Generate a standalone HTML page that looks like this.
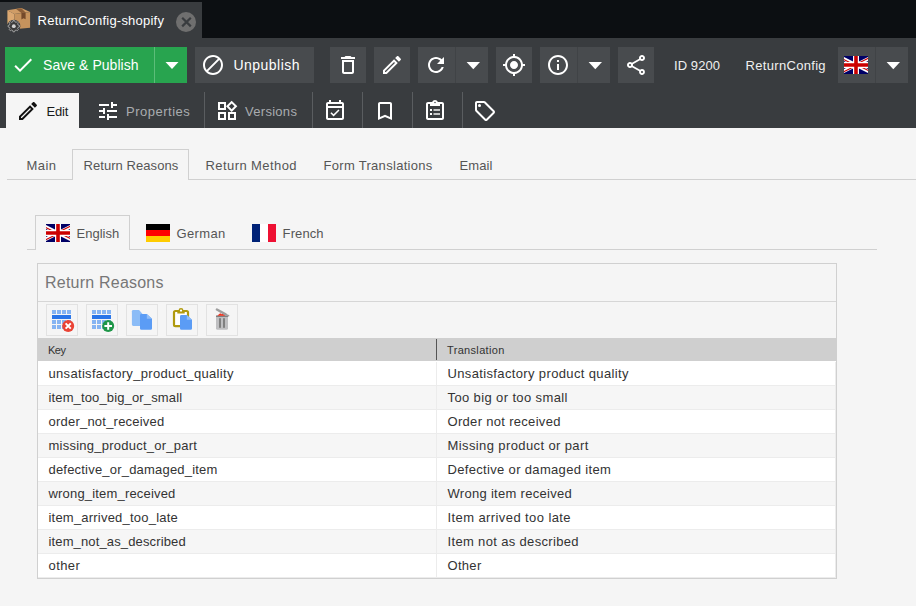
<!DOCTYPE html>
<html lang="en">
<head>
<meta charset="utf-8">
<title>ReturnConfig-shopify</title>
<style>
*{box-sizing:border-box;margin:0;padding:0}
html,body{width:916px;height:606px;overflow:hidden}
body{background:#f5f5f5;font-family:"Liberation Sans",sans-serif;font-size:13px;color:#333;position:relative}
.abs{position:absolute}
.t{position:absolute;white-space:nowrap;line-height:1}
#topbar{left:0;top:0;width:916px;height:38px;background:#0c0f12}
#maintab{left:0;top:2px;width:202px;height:36px;background:#393c3f}
#toolbar{left:0;top:38px;width:916px;height:90px;background:#393c3f}
.btn{position:absolute;top:47px;height:36px;background:#484b4e}
.ic{position:absolute;width:24px;height:24px;fill:#fff}
.sep{position:absolute;top:92px;width:1px;height:36px;background:#5a5d60}
.w{color:#fff}
.line{position:absolute;background:#d0d0d0}
.tab1{top:159px;font-size:13px;color:#555}
.tab2{top:227px;font-size:13px;color:#555}
.flag{position:absolute;width:24px;height:18px;overflow:hidden}
.ib{position:absolute;top:304px;width:32px;height:32px;border:1px solid #e2e2e2}
.row{position:absolute;left:38px;width:798px;height:24px;border-bottom:1px solid #ececec;background:#fff}
.row.alt{background:#f6f6f6}
.row span{position:absolute;top:5px;font-size:13px;line-height:14px;white-space:nowrap;color:#333}
.row .k{left:10.5px}
.row .v{left:409.5px}
</style>
</head>
<body>
<div id="topbar" class="abs"></div>
<div id="maintab" class="abs"></div>
<div id="toolbar" class="abs"></div>

<!-- main tab -->
<svg class="abs" style="left:4px;top:4px" width="32" height="32" viewBox="0 0 32 32">
  <polygon points="3.4,6.300 17.400,4.100 26.100,7.900 10.300,10" fill="#cf9c66"/>
  <polygon points="3.4,6.300 10.300,10 10.300,25.200 3.400,20.100" fill="#dba871"/>
  <polygon points="10.300,10 26.100,7.900 26.100,23.800 10.300,25.200" fill="#c6935d"/>
  <polygon points="12.100,5 17.400,4.200 21.600,8.500 17.400,9.100" fill="#8a5c36"/>
  <polygon points="17.400,9.100 21.600,8.500 21.600,15.300 19.500,14.200 17.400,15.600" fill="#74492a"/>
  <circle cx="9.800" cy="22.200" r="6.500" fill="#393c3f"/>
  <path d="M14.18 21.15 L15.44 21.40 L15.44 23.00 L14.18 23.25 L13.64 24.55 L14.36 25.62 L13.22 26.76 L12.15 26.04 L10.85 26.58 L10.60 27.84 L9.00 27.84 L8.75 26.58 L7.45 26.04 L6.38 26.76 L5.24 25.62 L5.96 24.55 L5.42 23.25 L4.16 23.00 L4.16 21.40 L5.42 21.15 L5.96 19.85 L5.24 18.78 L6.38 17.64 L7.45 18.36 L8.75 17.82 L9.00 16.56 L10.60 16.56 L10.85 17.82 L12.15 18.36 L13.22 17.64 L14.36 18.78 L13.64 19.85Z" fill="#3b3b3b" stroke="#b4b4b4" stroke-width="0.800" stroke-linejoin="round"/>
  <circle cx="9.800" cy="22.200" r="1.900" fill="#d2d2d2"/>
</svg>
<div class="t w" id="tabtitle" style="letter-spacing:0.22px;left:37.6px;top:14px;font-size:13px">ReturnConfig-shopify</div>
<svg class="abs" style="left:176px;top:12px" width="20" height="20" viewBox="0 0 20 20"><circle cx="10" cy="10" r="10" fill="#6f6f6f"/><path d="M6.200 5.800 L14.800 14.400 M14.800 5.800 L6.200 14.400" stroke="#393c3f" stroke-width="2.200" fill="none"/></svg>

<!-- toolbar row 1 -->
<div class="btn" style="left:5px;width:149px;background:#28a44f"></div>
<div class="btn" style="left:154px;width:1px;background:#5cbd79"></div>
<div class="btn" style="left:155px;width:32px;background:#28a44f"></div>
<svg class="ic" style="left:11px;top:53px" viewBox="0 0 24 24"><path d="M9 16.17L4.83 12l-1.42 1.41L9 19 21 7l-1.41-1.41z"/></svg>
<div class="t w" id="savetxt" style="letter-spacing:0.05px;left:43px;top:58px;font-size:14px">Save &amp; Publish</div>
<svg class="abs" style="left:165px;top:61px" width="14" height="9" viewBox="0 0 14 9"><polygon points="0.5,1 13.5,1 7,8" fill="#fff"/></svg>

<div class="btn" style="left:195px;width:119px"></div>
<svg class="ic" style="left:201px;top:53px" viewBox="0 0 24 24"><path d="M12 2C6.48 2 2 6.48 2 12s4.48 10 10 10 10-4.48 10-10S17.52 2 12 2zM4 12c0-4.42 3.58-8 8-8 1.85 0 3.55.63 4.9 1.69L5.69 16.9C4.63 15.55 4 13.85 4 12zm8 8c-1.85 0-3.55-.63-4.9-1.69L18.31 7.1C19.37 8.45 20 10.15 20 12c0 4.42-3.58 8-8 8z"/></svg>
<div class="t w" id="unpubtxt" style="letter-spacing:0.46px;left:233.5px;top:58px;font-size:14px">Unpublish</div>

<div class="btn" style="left:330px;width:36px"></div>
<svg class="ic" style="left:336px;top:53px" viewBox="0 0 24 24"><path d="M6 19c0 1.1.9 2 2 2h8c1.1 0 2-.9 2-2V7H6v12zM8 9h8v10H8V9zm7.500-5l-1-1h-5l-1 1H5v2h14V4h-3.500z"/></svg>

<div class="btn" style="left:374px;width:36px"></div>
<svg class="ic" style="left:380px;top:53px" viewBox="0 0 24 24"><path d="M14.060 9.020l.92.92L5.920 19H5v-.92l9.060-9.060M17.660 3c-.25 0-.51.1-.7.290l-1.830 1.830 3.750 3.750 1.830-1.830c.39-.39.39-1.020 0-1.410l-2.340-2.340c-.2-.2-.45-.29-.71-.29zm-3.600 3.190L3 17.250V21h3.750L17.810 9.940l-3.750-3.750z"/></svg>

<div class="btn" style="left:418px;width:37px"></div>
<div class="btn" style="left:455px;width:1px;background:#404346"></div>
<div class="btn" style="left:456px;width:32px"></div>
<svg class="ic" style="left:424px;top:53px" viewBox="0 0 24 24"><path d="M17.650 6.350C16.200 4.900 14.210 4 12 4c-4.420 0-7.990 3.580-7.990 8s3.570 8 7.990 8c3.730 0 6.840-2.550 7.730-6h-2.080c-.82 2.330-3.040 4-5.650 4-3.310 0-6-2.690-6-6s2.690-6 6-6c1.660 0 3.140.69 4.220 1.780L13 11h7V4l-2.350 2.350z"/></svg>
<svg class="abs" style="left:466px;top:61px" width="15" height="9" viewBox="0 0 15 9"><polygon points="0.600,0.900 14,0.900 7.300,8.300" fill="#fff"/></svg>

<div class="btn" style="left:496px;width:36px"></div>
<svg class="ic" style="left:502px;top:53px" viewBox="0 0 24 24"><path d="M12 8c-2.210 0-4 1.790-4 4s1.790 4 4 4 4-1.790 4-4-1.790-4-4-4zm8.940 3c-.46-4.170-3.770-7.480-7.940-7.940V1h-2v2.060C6.830 3.520 3.520 6.830 3.060 11H1v2h2.060c.46 4.170 3.770 7.480 7.940 7.940V23h2v-2.060c4.170-.46 7.480-3.770 7.940-7.940H23v-2h-2.060zM12 19c-3.870 0-7-3.130-7-7s3.130-7 7-7 7 3.130 7 7-3.130 7-7 7z"/></svg>

<div class="btn" style="left:540px;width:37px"></div>
<div class="btn" style="left:577px;width:1px;background:#404346"></div>
<div class="btn" style="left:578px;width:32px"></div>
<svg class="ic" style="left:546px;top:53px" viewBox="0 0 24 24"><path d="M11 7h2v2h-2zm0 4h2v6h-2zm1-9C6.480 2 2 6.480 2 12s4.480 10 10 10 10-4.480 10-10S17.520 2 12 2zm0 18c-4.410 0-8-3.590-8-8s3.590-8 8-8 8 3.590 8 8-3.590 8-8 8z"/></svg>
<svg class="abs" style="left:588px;top:61px" width="15" height="9" viewBox="0 0 15 9"><polygon points="0.600,0.900 14,0.900 7.300,8.300" fill="#fff"/></svg>

<div class="btn" style="left:618px;width:36px"></div>
<svg class="ic" style="left:624px;top:53px" viewBox="0 0 24 24"><path d="M18 16.080c-.76 0-1.440.3-1.960.77L8.910 12.700c.05-.23.09-.46.090-.7s-.04-.47-.09-.7l7.050-4.110c.54.5 1.250.81 2.040.81 1.660 0 3-1.340 3-3s-1.340-3-3-3-3 1.340-3 3c0 .24.040.47.090.7L8.040 9.810C7.500 9.310 6.790 9 6 9c-1.660 0-3 1.340-3 3s1.340 3 3 3c.79 0 1.500-.31 2.040-.81l7.120 4.160c-.05.21-.08.430-.08.650 0 1.610 1.310 2.920 2.920 2.920s2.920-1.310 2.920-2.920-1.310-2.920-2.920-2.920zM18 4c.55 0 1 .45 1 1s-.45 1-1 1-1-.45-1-1 .45-1 1-1zM6 13c-.55 0-1-.45-1-1s.45-1 1-1 1 .45 1 1-.45 1-1 1zm12 7.020c-.55 0-1-.45-1-1s.45-1 1-1 1 .45 1 1-.45 1-1 1z"/></svg>

<div class="t w" id="idtxt" style="letter-spacing:0.08px;left:674px;top:59px;font-size:13px;color:#f0f0f0">ID 9200</div>
<div class="t w" id="clstxt" style="letter-spacing:0.31px;left:745.6px;top:59px;font-size:13px;color:#f0f0f0">ReturnConfig</div>

<div class="btn" style="left:838px;width:37px"></div>
<div class="btn" style="left:875px;width:1px;background:#404346"></div>
<div class="btn" style="left:876px;width:32px"></div>
<svg class="flag" style="left:844px;top:56px" viewBox="0 0 24 18"><use href="#gb"/></svg>
<svg class="abs" style="left:886px;top:61px" width="15" height="9" viewBox="0 0 15 9"><polygon points="0.600,0.900 14,0.900 7.300,8.300" fill="#fff"/></svg>

<!-- toolbar row 2 -->
<div class="abs" style="left:6px;top:93px;width:73px;height:35px;background:#f5f5f5"></div>
<svg class="ic" style="left:16px;top:99px;fill:#111" viewBox="0 0 24 24"><path d="M14.060 9.020l.92.92L5.920 19H5v-.92l9.060-9.060M17.660 3c-.25 0-.51.1-.7.290l-1.830 1.830 3.750 3.750 1.830-1.830c.39-.39.39-1.020 0-1.410l-2.340-2.340c-.2-.2-.45-.29-.71-.29zm-3.600 3.190L3 17.250V21h3.750L17.810 9.940l-3.750-3.750z"/></svg>
<div class="t" id="edittxt" style="letter-spacing:-0.20px;left:46.5px;top:105px;font-size:13px;color:#1a1a1a">Edit</div>

<svg class="ic" style="left:96px;top:99px" viewBox="0 0 24 24"><path d="M3 17v2h6v-2H3zM3 5v2h10V5H3zm10 16v-2h8v-2h-8v-2h-2v6h2zM7 9v2H3v2h4v2h2V9H7zm14 4v-2H11v2h10zm-6-4h2V7h4V5h-4V3h-2v6z"/></svg>
<div class="t" id="proptxt" style="letter-spacing:0.50px;left:126px;top:105px;font-size:13px;color:#a9acaf">Properties</div>
<div class="sep" style="left:204px"></div>
<svg class="ic" style="left:215px;top:99px" viewBox="0 0 24 24"><path d="M16.660 4.520l2.830 2.830-2.830 2.830-2.830-2.830 2.830-2.830M9 5v4H5V5h4m10 10v4h-4v-4h4M9 15v4H5v-4h4m7.660-13.310L11 7.340 16.660 13l5.660-5.660-5.660-5.650zM11 3H3v8h8V3zm10 10h-8v8h8v-8zm-10 0H3v8h8v-8z"/></svg>
<div class="t" id="vertxt" style="letter-spacing:0.29px;left:245px;top:105px;font-size:13px;color:#a9acaf">Versions</div>
<div class="sep" style="left:312px"></div>
<svg class="ic" style="left:323px;top:99px" viewBox="0 0 24 24"><path d="M19 3h-1V1h-2v2H8V1H6v2H5c-1.110 0-1.990.9-1.990 2L3 19c0 1.100.89 2 2 2h14c1.100 0 2-.9 2-2V5c0-1.100-.9-2-2-2zm0 16H5V9h14v10zM5 7V5h14v2H5zm5.560 10.460l5.930-5.930-1.060-1.060-4.870 4.870-2.110-2.110-1.060 1.060z"/></svg>
<div class="sep" style="left:362px"></div>
<svg class="ic" style="left:373px;top:99px" viewBox="0 0 24 24"><path d="M17 3H7c-1.100 0-1.990.9-1.990 2L5 21l7-3 7 3V5c0-1.100-.9-2-2-2zm0 15l-5-2.180L7 18V5h10v13z"/></svg>
<div class="sep" style="left:412px"></div>
<svg class="ic" style="left:423px;top:99px" viewBox="0 0 24 24"><path d="M19 3h-4.180C14.400 1.840 13.300 1 12 1c-1.300 0-2.400.84-2.820 2H5c-1.100 0-2 .9-2 2v14c0 1.100.9 2 2 2h14c1.100 0 2-.9 2-2V5c0-1.100-.9-2-2-2zm-7-.25c.41 0 .75.340.75.750s-.34.750-.75.750-.75-.34-.75-.75.340-.75.750-.75zM19 19H5V5h2v2h10V5h2v14z"/><rect x="7" y="10" width="2" height="2"/><rect x="10.500" y="10.300" width="6.500" height="1.400"/><rect x="7" y="14" width="2" height="2"/><rect x="10.500" y="14.300" width="6.500" height="1.400"/></svg>
<div class="sep" style="left:462px"></div>
<svg class="ic" style="left:473px;top:99px" viewBox="0 0 24 24"><path d="M21.410 11.580l-9-9C12.050 2.220 11.550 2 11 2H4c-1.100 0-2 .9-2 2v7c0 .55.220 1.050.59 1.420l9 9c.36.360.86.580 1.410.580s1.050-.22 1.410-.59l7-7c.37-.36.590-.86.590-1.410s-.23-1.060-.59-1.420zM13 20.010L4 11V4h7v-.01l9 9-7 7.020z"/><circle cx="6.500" cy="6.500" r="1.500"/></svg>

<!-- inner tabs -->
<div class="line" style="left:7px;top:179px;width:909px;height:1px"></div>
<div class="abs" style="left:72px;top:149px;width:117px;height:31px;border:1px solid #d0d0d0;border-bottom:none;background:#f5f5f5"></div>
<div class="t tab1" id="t_main" style="letter-spacing:0.47px;left:26.5px">Main</div>
<div class="t tab1" id="t_rr" style="letter-spacing:0.06px;left:83.5px">Return Reasons</div>
<div class="t tab1" id="t_rm" style="letter-spacing:0.42px;left:205.5px">Return Method</div>
<div class="t tab1" id="t_ft" style="letter-spacing:0.30px;left:323.5px">Form Translations</div>
<div class="t tab1" id="t_em" style="letter-spacing:0.10px;left:459.5px">Email</div>

<!-- language tabs -->
<div class="line" style="left:27px;top:249px;width:850px;height:1px"></div>
<div class="abs" style="left:35px;top:215px;width:95px;height:35px;border:1px solid #d0d0d0;border-bottom:none;background:#f5f5f5"></div>
<svg width="0" height="0" style="position:absolute"><defs>
<clipPath id="gbt"><path d="M30,15 h30 v15 z v15 h-30 z h-30 v-15 z v-15 h30 z"/></clipPath><g id="gb" transform="scale(0.6) translate(-10,0)"><path d="M0,0 v30 h60 v-30 z" fill="#000066"/><path d="M0,0 L60,30 M60,0 L0,30" stroke="#fff" stroke-width="6"/><path d="M0,0 L60,30 M60,0 L0,30" clip-path="url(#gbt)" stroke="#cc0000" stroke-width="4"/><path d="M30,0 v30 M0,15 h60" stroke="#fff" stroke-width="10"/><path d="M30,0 v30 M0,15 h60" stroke="#cc0000" stroke-width="6"/></g>
</defs></svg>
<svg class="flag" style="left:46px;top:224px" viewBox="0 0 24 18"><use href="#gb"/></svg>
<div class="t tab2" id="l_en" style="left:76.5px">English</div>
<svg class="flag" style="left:146px;top:224px" viewBox="0 0 24 18"><rect width="24" height="6" fill="#000"/><rect y="6" width="24" height="6" fill="#ff0000"/><rect y="12" width="24" height="6" fill="#ffcc00"/></svg>
<div class="t tab2" id="l_de" style="letter-spacing:0.40px;left:176.4px">German</div>
<svg class="flag" style="left:252px;top:224px" viewBox="0 0 24 18"><rect width="8" height="18" fill="#002277"/><rect x="8" width="8" height="18" fill="#fff"/><rect x="16" width="8" height="18" fill="#ee1133"/></svg>
<div class="t tab2" id="l_fr" style="letter-spacing:0.10px;left:282.6px">French</div>

<!-- panel -->
<div class="abs" style="left:37px;top:263px;width:800px;height:316px;border:1px solid #d0d0d0"></div>
<div class="t" id="ptitle" style="letter-spacing:0.22px;left:45px;top:275px;font-size:16px;color:#777">Return Reasons</div>
<div class="line" style="left:38px;top:301px;width:798px;height:1px;background:#d6d6d6"></div>

<div class="ib" style="left:46px"></div><svg class="abs" style="left:46px;top:304px" width="32" height="32" viewBox="0 0 32 32"><g fill="#86b4f2"><rect x="6" y="6" width="4" height="4"/><rect x="11" y="6" width="4" height="4"/><rect x="16" y="6" width="4" height="4"/><rect x="21" y="6" width="4" height="4"/><rect x="6" y="16" width="4" height="4"/><rect x="11" y="16" width="4" height="4"/><rect x="16" y="16" width="4" height="4"/><rect x="21" y="16" width="4" height="4"/><rect x="6" y="21" width="4" height="4"/><rect x="11" y="21" width="4" height="4"/><rect x="16" y="21" width="4" height="4"/><rect x="21" y="21" width="4" height="4"/></g><rect x="6" y="11" width="19" height="4" fill="#2a75e8"/><circle cx="22.200" cy="22" r="6" fill="#ea4335"/><path d="M19.600 19.400L24.800 24.600M24.800 19.400L19.600 24.600" stroke="#fff" stroke-width="2" fill="none"/></svg>
<div class="ib" style="left:86px"></div><svg class="abs" style="left:86px;top:304px" width="32" height="32" viewBox="0 0 32 32"><g fill="#86b4f2"><rect x="6" y="6" width="4" height="4"/><rect x="11" y="6" width="4" height="4"/><rect x="16" y="6" width="4" height="4"/><rect x="21" y="6" width="4" height="4"/><rect x="6" y="16" width="4" height="4"/><rect x="11" y="16" width="4" height="4"/><rect x="16" y="16" width="4" height="4"/><rect x="21" y="16" width="4" height="4"/><rect x="6" y="21" width="4" height="4"/><rect x="11" y="21" width="4" height="4"/><rect x="16" y="21" width="4" height="4"/><rect x="21" y="21" width="4" height="4"/></g><rect x="6" y="11" width="19" height="4" fill="#2a75e8"/><circle cx="22.200" cy="22" r="6" fill="#1e9648"/><path d="M22.200 18.200V25.800M18.400 22H26" stroke="#fff" stroke-width="2" fill="none"/></svg>
<div class="ib" style="left:126px"></div><svg class="abs" style="left:126px;top:304px" width="32" height="32" viewBox="0 0 32 32"><path d="M7.300 5.900h5.800l3 3.500v11.500q0 1.100-1.100 1.100h-7.700q-1.400 0-1.400-1.400v-13.300q0-1.400 1.400-1.400z" fill="#8bbcf7"/><path d="M15.4 10.0h5.400l5.200 4.800v9.6q0 1.400-1.400 1.400h-9.200q-1.400 0-1.400-1.400v-13.0q0-1.400 1.400-1.400z" fill="#5b9cf5"/><path d="M20.8 10.0l5.200 4.800h-5.200z" fill="#8fbdf8"/></svg>
<div class="ib" style="left:166px"></div><svg class="abs" style="left:166px;top:304px" width="32" height="32" viewBox="0 0 32 32"><rect x="8" y="7" width="14" height="15.200" rx="1.400" fill="#fff" stroke="#b09a0e" stroke-width="2.200"/><rect x="11.300" y="6.300" width="7.400" height="3.200" fill="#b09a0e"/><circle cx="15" cy="6.300" r="2.400" fill="#b09a0e"/><circle cx="15" cy="6.600" r="1.150" fill="#fff"/><path d="M15.4 11.0h5.400l5.200 4.800v8.6q0 1.400-1.400 1.400h-9.200q-1.400 0-1.400-1.400v-12.0q0-1.400 1.400-1.400z" fill="#5b9cf5"/><path d="M20.8 11.0l5.200 4.800h-5.200z" fill="#8fbdf8"/></svg>
<div class="ib" style="left:206px"></div><svg class="abs" style="left:206px;top:304px" width="32" height="32" viewBox="0 0 32 32"><path d="M10 12h12v12.200q0 1.600-1.600 1.600h-8.800q-1.600 0-1.600-1.600z" fill="#bfbfc1"/><rect x="10" y="11.600" width="12" height="1" fill="#555"/><rect x="13" y="14.200" width="2" height="9.600" fill="#808080"/><rect x="17" y="14.200" width="2" height="9.600" fill="#808080"/><path d="M11.200 11.700l3-2.400 1.600 0.900 1.200-1 2.600 2.500z" fill="#f0321e"/><path d="M10.900 5.500L19.600 10.300" stroke="#9e9e9e" stroke-width="2.500" stroke-linecap="round"/><path d="M19 10.200L22.600 11.700" stroke="#9e9e9e" stroke-width="1.600" stroke-linecap="round"/></svg>

<!-- table -->
<div class="abs" style="left:38px;top:338px;width:798px;height:24px;background:#fff"></div>
<div class="abs" style="left:38px;top:338px;width:799px;height:23px;background:#cfcfcf"></div>
<div class="abs" style="left:436px;top:339px;width:1px;height:21px;background:#555"></div>
<div class="t" id="h_key" style="letter-spacing:-0.50px;left:48px;top:345px;font-size:11px;color:#333">Key</div>
<div class="t" id="h_tr" style="letter-spacing:0.33px;left:447px;top:345px;font-size:11px;color:#333">Translation</div>

<div class="row" style="top:362px"><span class="k" style="letter-spacing:0.32px">unsatisfactory_product_quality</span><span class="v" style="letter-spacing:0.36px">Unsatisfactory product quality</span></div>
<div class="row alt" style="top:386px"><span class="k" style="letter-spacing:0.14px">item_too_big_or_small</span><span class="v" style="letter-spacing:0.38px">Too big or too small</span></div>
<div class="row" style="top:410px"><span class="k" style="letter-spacing:0.22px">order_not_received</span><span class="v" style="letter-spacing:0.31px">Order not received</span></div>
<div class="row alt" style="top:434px"><span class="k" style="letter-spacing:0.24px">missing_product_or_part</span><span class="v" style="letter-spacing:0.39px">Missing product or part</span></div>
<div class="row" style="top:458px"><span class="k" style="letter-spacing:0.20px">defective_or_damaged_item</span><span class="v" style="letter-spacing:0.33px">Defective or damaged item</span></div>
<div class="row alt" style="top:482px"><span class="k" style="letter-spacing:0.18px">wrong_item_received</span><span class="v" style="letter-spacing:0.29px">Wrong item received</span></div>
<div class="row" style="top:506px"><span class="k" style="letter-spacing:0.21px">item_arrived_too_late</span><span class="v" style="letter-spacing:0.41px">Item arrived too late</span></div>
<div class="row alt" style="top:530px"><span class="k" style="letter-spacing:0.14px">item_not_as_described</span><span class="v" style="letter-spacing:0.34px">Item not as described</span></div>
<div class="row" style="top:554px"><span class="k" style="letter-spacing:0.42px">other</span><span class="v" style="letter-spacing:0.30px">Other</span></div>
<div class="abs" style="left:436px;top:362px;width:1px;height:216px;background:#ececec"></div>
<div class="abs" style="left:835px;top:362px;width:1px;height:216px;background:#ececec"></div>
</body>
</html>
